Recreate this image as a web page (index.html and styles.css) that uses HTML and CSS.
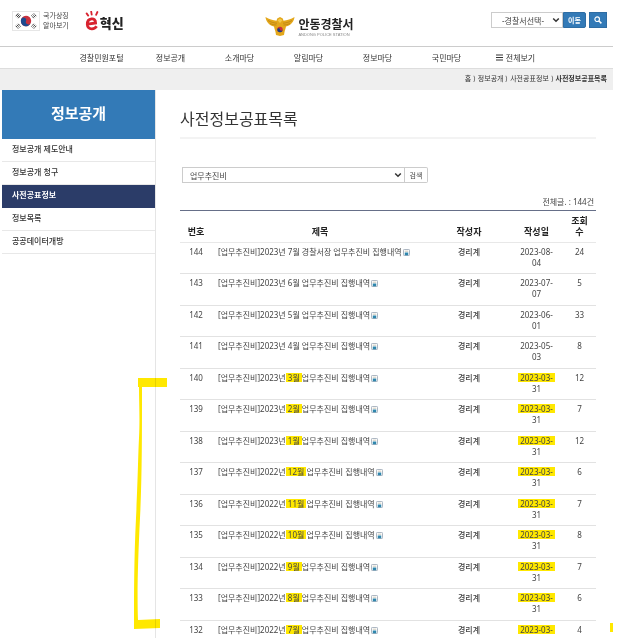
FILE: index.html
```html
<!DOCTYPE html>
<html lang="ko">
<head>
  <meta charset="UTF-8">
  <meta name="viewport" content="width=device-width, initial-scale=1.0">
  <title>사전정보공표목록 - 안동경찰서</title>
  <link rel="stylesheet" href="styles.css">
</head>
<body>
  <svg width="0" height="0" class="defs" aria-hidden="true">
    <symbol id="file" viewBox="0 0 8 8">
      <rect x=".5" y=".5" width="7" height="7" rx="1" fill="#fff" stroke="#9aa7b5"/>
      <path d="M2 2.5h4" stroke="#b9b39c" stroke-width=".8"/>
      <rect x="2" y="4" width="4" height="3.2" fill="#2f86ad"/>
    </symbol>
    <symbol id="chevron" viewBox="0 0 8 8">
      <path d="M1.2 2.5 4 5.3l2.8-2.8" fill="none" stroke="#333" stroke-width="1.5"/>
    </symbol>
  </svg>

  <div class="page">
    <header class="header">
      <div class="header-left">
        <a href="#" class="symbol">
          <svg class="flag" viewBox="0 0 28 20" aria-hidden="true">
            <rect x=".5" y=".5" width="27" height="19" fill="#fff" stroke="#e6e6e6"/>
            <g transform="rotate(20 14 10)">
              <circle cx="14" cy="10" r="5.2" fill="#c8313e"/>
              <path d="M8.8 10a2.6 2.6 0 0 1 5.2 0 2.6 2.6 0 0 0 5.2 0 5.2 5.2 0 0 1-10.4 0z" fill="#1d4a8f"/>
            </g>
            <g stroke="#333" stroke-width="1">
              <path d="M3.8 5.2 6.2 2.4M5 6.2l2.4-2.8M6.2 7.2l2.4-2.8"/>
              <path d="M24.2 5.2 21.8 2.4M23 6.2l-2.4-2.8M21.8 7.2l-2.4-2.8" stroke-dasharray="1.5 .6"/>
              <path d="M3.8 14.8l2.4 2.8M5 13.8l2.4 2.8M6.2 12.8l2.4 2.8" stroke-dasharray="2.4 .6"/>
              <path d="M24.2 14.8l-2.4 2.8M23 13.8l-2.4 2.8M21.8 12.8l-2.4 2.8" stroke-dasharray="1.5 .6"/>
            </g>
          </svg>
          <span>국가상징<br>알아보기</span>
        </a>
        <a href="#" class="innovation">
          <svg viewBox="0 0 14 20" aria-hidden="true">
            <path d="M2.6 13.2 10.6 12C10.6 8.6 8.6 7.6 6.6 7.9 3.6 8.3 2.2 10.6 2.3 13.4c.1 3 2 4.7 4.7 4.5 2-.1 3.6-1 4.6-2.6" fill="none" stroke="#d8232f" stroke-width="2.8"/>
            <path d="M1.6 2.4l1.6 2.2M6.2.6l.5 3M12.4 1l-1.3 2.8" stroke="#d8232f" stroke-width="1.8" stroke-linecap="round"/>
          </svg>
          <strong>혁신</strong>
        </a>
      </div>

      <a href="#" class="logo">
        <svg viewBox="0 0 30 20" aria-hidden="true">
          <path d="M.5 1C4 3 8 4.400 11.500 4.800L12.200 2.500 15 1l2.800 1.500.7 2.300C22 4.400 26 3 29.500 1 29 5.500 26 9.500 21 10.500c-.5 2.500-1.200 4-1.500 5.500l-.5 3L15 20l-4-1-.5-3c-.3-1.500-1-3-1.500-5.500C4 9.500 1 5.500.500 1z" fill="#e3a71b"/>
          <path d="M3 4.500C6 6.300 9 7 12 7.200M5 7.500c2 1 4.500 1.500 6.500 1.500M27 4.500C24 6.300 21 7 18 7.200M25 7.500c-2 1-4.500 1.500-6.500 1.500" stroke="#b47c12" stroke-width=".7" fill="none"/>
          <path d="M12.500 4.200 15 2.500l2.500 1.700L15 7z" fill="#f3ca4b"/>
          <circle cx="15" cy="13.500" r="2.700" fill="#c8313e"/>
          <path d="M12.300 13.500a1.350 1.350 0 0 1 2.700 0 1.350 1.350 0 0 0 2.700 0 2.700 2.700 0 0 1-5.400 0z" fill="#1d3f86"/>
        </svg>
        <span class="logo-text">
          <strong>안동경찰서</strong>
          <small>ANDONG POLICE STATION</small>
        </span>
      </a>

      <form class="header-right">
        <div class="select-wrap station">
          <select aria-label="경찰서선택">
            <option>-경찰서선택-</option>
          </select>
          <svg class="arrow" aria-hidden="true"><use href="#chevron"/></svg>
        </div>
        <button type="button" class="btn-go">이동</button>
        <button type="button" class="btn-search" aria-label="검색">
          <svg viewBox="0 0 8 8" aria-hidden="true">
            <circle cx="3.200" cy="3.200" r="2.300" fill="none" stroke="#fff" stroke-width="1.200"/>
            <path d="M5 5l2.400 2.400" stroke="#fff" stroke-width="1.500"/>
          </svg>
        </button>
      </form>
    </header>

    <nav class="gnb">
      <a href="#">경찰민원포털</a>
      <a href="#">정보공개</a>
      <a href="#">소개마당</a>
      <a href="#">알림마당</a>
      <a href="#">정보마당</a>
      <a href="#">국민마당</a>
      <a href="#" class="all">
        <svg viewBox="0 0 7 7" aria-hidden="true"><path d="M0 1h7M0 3.500h7M0 6h7" stroke="#333"/></svg>
        전체보기
      </a>
    </nav>

    <div class="location">홈 ⟩ 정보공개 ⟩ 사전공표정보 ⟩ <strong>사전정보공표목록</strong></div>

    <div class="body">
      <aside class="sidebar">
        <h2>정보공개</h2>
        <ul>
          <li><a href="#">정보공개 제도안내</a></li>
          <li><a href="#">정보공개 청구</a></li>
          <li><a href="#" class="active">사전공표정보</a></li>
          <li><a href="#">정보목록</a></li>
          <li><a href="#">공공데이터개방</a></li>
        </ul>
      </aside>

      <main class="content">
        <h1>사전정보공표목록</h1>

        <form class="filter">
          <div class="select-wrap category">
            <select aria-label="분류">
              <option>업무추진비</option>
            </select>
            <svg class="arrow" aria-hidden="true"><use href="#chevron"/></svg>
          </div>
          <button type="button">검색</button>
        </form>

        <p class="total">전체글. : 144건</p>

        <table class="board">
          <colgroup>
            <col class="col-no">
            <col>
            <col class="col-writer">
            <col class="col-date">
            <col class="col-hit">
          </colgroup>
          <thead>
            <tr><th>번호</th><th>제목</th><th>작성자</th><th>작성일</th><th>조회수</th></tr>
          </thead>
          <tbody>
            <tr>
              <td>144</td>
              <td class="subject"><a href="#">[업무추진비]2023년 7월 경찰서장 업무추진비 집행내역</a><svg class="file"><use href="#file"/></svg></td>
              <td class="writer">경리계</td><td class="date">2023-08-<wbr>04</td><td>24</td>
            </tr>
            <tr>
              <td>143</td>
              <td class="subject"><a href="#">[업무추진비]2023년 6월 업무추진비 집행내역</a><svg class="file"><use href="#file"/></svg></td>
              <td class="writer">경리계</td><td class="date">2023-07-<wbr>07</td><td>5</td>
            </tr>
            <tr>
              <td>142</td>
              <td class="subject"><a href="#">[업무추진비]2023년 5월 업무추진비 집행내역</a><svg class="file"><use href="#file"/></svg></td>
              <td class="writer">경리계</td><td class="date">2023-06-<wbr>01</td><td>33</td>
            </tr>
            <tr>
              <td>141</td>
              <td class="subject"><a href="#">[업무추진비]2023년 4월 업무추진비 집행내역</a><svg class="file"><use href="#file"/></svg></td>
              <td class="writer">경리계</td><td class="date">2023-05-<wbr>03</td><td>8</td>
            </tr>
            <tr>
              <td>140</td>
              <td class="subject"><a href="#">[업무추진비]2023년 <mark>3월</mark> 업무추진비 집행내역</a><svg class="file"><use href="#file"/></svg></td>
              <td class="writer">경리계</td><td class="date"><mark>2023-03-</mark><wbr>31</td><td>12</td>
            </tr>
            <tr>
              <td>139</td>
              <td class="subject"><a href="#">[업무추진비]2023년 <mark>2월</mark> 업무추진비 집행내역</a><svg class="file"><use href="#file"/></svg></td>
              <td class="writer">경리계</td><td class="date"><mark>2023-03-</mark><wbr>31</td><td>7</td>
            </tr>
            <tr>
              <td>138</td>
              <td class="subject"><a href="#">[업무추진비]2023년 <mark>1월</mark> 업무추진비 집행내역</a><svg class="file"><use href="#file"/></svg></td>
              <td class="writer">경리계</td><td class="date"><mark>2023-03-</mark><wbr>31</td><td>12</td>
            </tr>
            <tr>
              <td>137</td>
              <td class="subject"><a href="#">[업무추진비]2022년 <mark>12월</mark> 업무추진비 집행내역</a><svg class="file"><use href="#file"/></svg></td>
              <td class="writer">경리계</td><td class="date"><mark>2023-03-</mark><wbr>31</td><td>6</td>
            </tr>
            <tr>
              <td>136</td>
              <td class="subject"><a href="#">[업무추진비]2022년 <mark>11월</mark> 업무추진비 집행내역</a><svg class="file"><use href="#file"/></svg></td>
              <td class="writer">경리계</td><td class="date"><mark>2023-03-</mark><wbr>31</td><td>7</td>
            </tr>
            <tr>
              <td>135</td>
              <td class="subject"><a href="#">[업무추진비]2022년 <mark>10월</mark> 업무추진비 집행내역</a><svg class="file"><use href="#file"/></svg></td>
              <td class="writer">경리계</td><td class="date"><mark>2023-03-</mark><wbr>31</td><td>8</td>
            </tr>
            <tr>
              <td>134</td>
              <td class="subject"><a href="#">[업무추진비]2022년 <mark>9월</mark> 업무추진비 집행내역</a><svg class="file"><use href="#file"/></svg></td>
              <td class="writer">경리계</td><td class="date"><mark>2023-03-</mark><wbr>31</td><td>7</td>
            </tr>
            <tr>
              <td>133</td>
              <td class="subject"><a href="#">[업무추진비]2022년 <mark>8월</mark> 업무추진비 집행내역</a><svg class="file"><use href="#file"/></svg></td>
              <td class="writer">경리계</td><td class="date"><mark>2023-03-</mark><wbr>31</td><td>6</td>
            </tr>
            <tr>
              <td>132</td>
              <td class="subject"><a href="#">[업무추진비]2022년 <mark>7월</mark> 업무추진비 집행내역</a><svg class="file"><use href="#file"/></svg></td>
              <td class="writer">경리계</td><td class="date"><mark>2023-03-</mark></td><td>4</td>
            </tr>
          </tbody>
        </table>
      </main>
    </div>

    <!-- highlighter strokes over the list -->
    <svg class="bracket" viewBox="0 0 34 252" aria-hidden="true">
      <path d="M4 0H33V9H8C8 60 8 100 6 140C4 180 3 215 4 242L26 241V250L0 251C0 215 0 180 2 140C4 100 4 80 5 60C6 40 5 25 5 9H4Z" fill="#ffe800"/>
    </svg>
    <span class="edge-mark"></span>
  </div>
</body>
</html>
```
FILE: styles.css
```css
* {
  box-sizing: border-box;
}
body {
  margin: 0;
  background: #fff;
  color: #444;
  font-family: "Noto Sans", "Noto Sans CJK KR", sans-serif;
  font-size: 8px;
  line-height: 11px;
}
a {
  color: inherit;
  text-decoration: none;
}
h1, h2, p, ul {
  margin: 0;
  padding: 0;
}
ul {
  list-style: none;
}
button, select {
  font: inherit;
  color: inherit;
  margin: 0;
  padding: 0;
  border-radius: 0;
}
svg {
  display: block;
}
.defs {
  position: absolute;
}
.page {
  position: relative;
  height: 100vh;
  overflow: hidden;
  padding-right: 27px;
}

/* header */
.header {
  display: grid;
  grid-template-columns: 1fr auto 1fr;
  align-items: start;
  height: 47px;
  padding: 9px 6px 0 12px;
  border-bottom: 1px solid #ccc;
}
.header-left {
  display: flex;
  gap: 16px;
}
.symbol {
  display: flex;
  align-items: center;
  gap: 3px;
  font-size: 7px;
  line-height: 10px;
}
.flag {
  width: 28px;
  height: 20px;
}
.innovation {
  display: flex;
  align-items: center;
  gap: 1px;
  color: #222;
}
.innovation svg {
  width: 14px;
  height: 20px;
}
.innovation strong {
  font-size: 13px;
  font-weight: 900;
  line-height: 20px;
  padding-top: 4px;
}
.logo {
  display: flex;
  gap: 3px;
  padding-top: 7px;
}
.logo svg {
  width: 30px;
  height: 20px;
}
.logo-text strong {
  display: block;
  padding-top: 2px;
  font-size: 12px;
  line-height: 14px;
  color: #222;
}
.logo-text small {
  display: block;
  font-family: "Liberation Sans", Arial, sans-serif;
  font-size: 4px;
  line-height: 5px;
  color: #888;
}
.header-right {
  display: flex;
  justify-content: flex-end;
  padding-top: 3px;
}
.select-wrap {
  position: relative;
}
.select-wrap select {
  display: block;
  width: 100%;
  height: 16px;
  background: #fff;
  border: 1px solid #ccc;
  appearance: none;
}
.arrow {
  position: absolute;
  right: 3px;
  top: 4px;
  width: 8px;
  height: 8px;
  pointer-events: none;
}
.station {
  width: 72px;
}
.station select {
  padding-left: 10px;
}
.btn-go, .btn-search {
  height: 16px;
  background: #337ab7;
  border: 1px solid #2e6da4;
  color: #fff;
}
.btn-go {
  width: 23px;
  border-radius: 0 2px 2px 0;
  font-size: 7px;
  font-weight: bold;
}
.btn-search {
  display: flex;
  align-items: center;
  justify-content: center;
  width: 18px;
  margin-left: 3px;
}
.btn-search svg {
  width: 8px;
  height: 8px;
}

/* menu */
.gnb {
  display: grid;
  grid-template-columns: repeat(7, 1fr);
  height: 22px;
  padding: 0 63px 0 67px;
  border-bottom: 1px solid #ddd;
  line-height: 21px;
  text-align: center;
  color: #333;
}
.gnb .all {
  display: flex;
  align-items: center;
  justify-content: center;
  gap: 3px;
}
.gnb svg {
  width: 7px;
  height: 7px;
}
.location {
  height: 21px;
  padding-right: 6px;
  background: #efefef;
  color: #333;
  font-size: 7px;
  line-height: 20px;
  text-align: right;
}

/* left menu */
.body {
  display: flex;
  min-height: 100%;
}
.sidebar {
  flex: 0 0 154px;
  margin-left: 2px;
  border-right: 1px solid #e5e5e5;
}
.sidebar h2 {
  height: 49px;
  background: #337ab7;
  color: #fff;
  font-size: 15px;
  line-height: 46px;
  text-align: center;
}
.sidebar a {
  display: block;
  height: 23px;
  padding-left: 10px;
  border-bottom: 1px solid #e8e8e8;
  color: #333;
  font-weight: 500;
  line-height: 20px;
}
.sidebar .active {
  background: #2b3c68;
  border-color: #2b3c68;
  color: #fff;
  font-weight: bold;
}

/* content */
.content {
  flex: 1;
  padding: 19px 17px 0 24px;
}
.content h1 {
  padding-bottom: 8px;
  border-bottom: 2px solid #f3f3f3;
  color: #333;
  font-size: 16px;
  font-weight: normal;
  line-height: 20px;
}
.filter {
  display: flex;
  margin: 28px 0 13px 2px;
}
.category {
  width: 223px;
}
.category select {
  padding-left: 7px;
}
.filter button {
  width: 23px;
  height: 16px;
  background: #fff;
  border: 1px solid #ccc;
  border-left: 0;
  border-radius: 0 2px 2px 0;
  font-size: 7px;
}
.total {
  margin-bottom: 3px;
  padding-right: 2px;
  text-align: right;
}
.board {
  width: 100%;
  table-layout: fixed;
  border-top: 1px solid #666f88;
  border-spacing: 0;
  text-align: center;
}
.col-no {
  width: 32px;
}
.col-writer {
  width: 82px;
}
.col-date {
  width: 53px;
}
.col-hit {
  width: 33px;
}
.board th {
  padding: 4px 8px 5px;
  border-bottom: 1px solid #e8e8e8;
  color: #222;
  font-size: 9px;
  vertical-align: bottom;
}
.board td {
  height: 31px;
  padding: 3px 0 0;
  border-bottom: 1px solid #e2e2e2;
  vertical-align: top;
}
.board tr:nth-child(even) td {
  height: 32px;
}
.board th:first-child, .board th:nth-child(3), .board th:nth-child(4) {
  padding-left: 0;
  padding-right: 0;
}
.board .subject {
  padding-left: 6px;
  text-align: left;
  white-space: nowrap;
}
.board .writer {
  font-weight: 500;
}
.board .date {
  padding-left: 8px;
  padding-right: 8px;
}
.file {
  display: inline-block;
  width: 7px;
  height: 7px;
  margin-left: 1px;
  vertical-align: -1px;
}
mark {
  display: inline-block;
  height: 9px;
  margin: 0 -2px;
  padding: 0 2px;
  background: #ffe800;
  color: inherit;
  line-height: 9px;
}

/* highlighter */
.bracket {
  position: absolute;
  left: 134px;
  top: 378px;
  width: 34px;
  height: 252px;
  mix-blend-mode: multiply;
}
.edge-mark {
  position: absolute;
  right: 27px;
  top: 623px;
  width: 3px;
  height: 9px;
  background: #ffe800;
}
```
